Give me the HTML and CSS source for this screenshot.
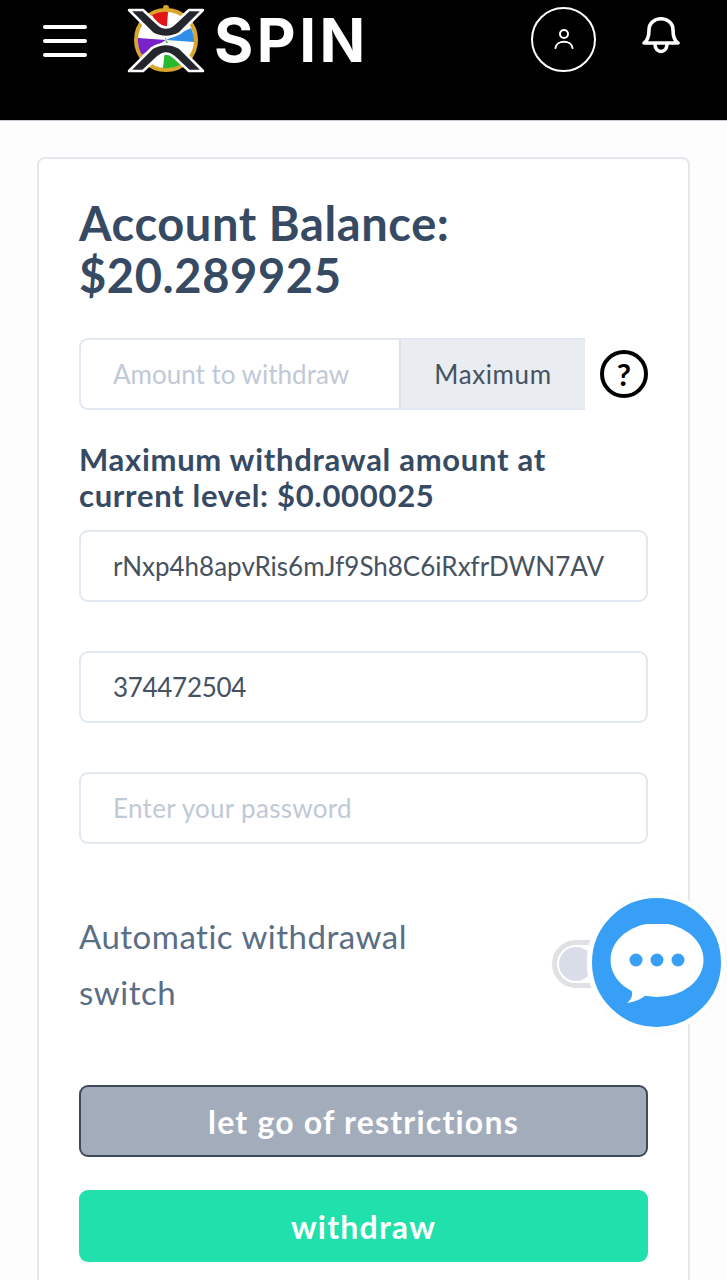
FILE: index.html
```html
<!DOCTYPE html>
<html>
<head>
  <title>Withdraw</title>
  <link rel="stylesheet" href="styles.css">
</head>
<body>
  <header class="topbar">
    <div class="menu-btn"><span></span><span></span><span></span></div>
    <div class="logo">
      <svg class="logo-mark" width="80" height="72" viewBox="0 0 80 72">
        <circle cx="40" cy="35" r="30" fill="#fff" stroke="#d9a52c" stroke-width="4"/>
        <path d="M40 35 L26 10 A28 28 0 0 1 42 7 Z" fill="#e01616"/>
        <path d="M40 35 L65 23 A28 28 0 0 1 68 37 Z" fill="#2f8fe8"/>
        <path d="M40 35 L12 33 A28 28 0 0 0 16 50 Z" fill="#7a22c9"/>
        <path d="M40 35 L37 63 A28 28 0 0 0 58 57 Z" fill="#29b92f"/>
        <circle cx="40" cy="3" r="3" fill="#d9a52c"/>
        <path class="x-arm" d="M3 5 L17 5 L32 19 Q40 26 48 19 L63 5 L77 5 L54 28 Q40 36 26 28 Z"/>
        <path class="x-arm" d="M3 66 L17 66 L32 52 Q40 45 48 52 L63 66 L77 66 L54 43 Q40 35 26 43 Z"/>
      </svg>
      <span class="logo-text">SPIN</span>
    </div>
    <div class="topbar-right">
      <div class="profile-btn">
        <svg width="20" height="24" viewBox="0 0 20 24" fill="none" stroke="#fff" stroke-width="2">
          <circle cx="10" cy="6" r="4"/>
          <path d="M1.5 20 C2.5 11.5 17.5 11.5 18.5 20" stroke-linecap="round"/>
        </svg>
      </div>
      <svg class="bell" width="38" height="38" viewBox="0 0 38 38" fill="none" stroke="#fff" stroke-width="3.6" stroke-linejoin="round">
        <path d="M2 26 C6.5 23 7 18 7 13 C7 -2 31 -2 31 13 C31 18 31.5 23 36 26 Z"/>
        <path d="M13 27 C13 37 25 37 25 27"/>
      </svg>
    </div>
  </header>

  <main class="page">
    <section class="card">
      <h1>Account Balance:<br>$20.289925</h1>

      <div class="amount-row">
        <div class="input-group">
          <div class="input-part placeholder">Amount to withdraw</div>
          <div class="addon">Maximum</div>
        </div>
        <div class="help">?</div>
      </div>

      <p class="limit">Maximum withdrawal amount at<br>current level: $0.000025</p>

      <div class="field field-first">rNxp4h8apvRis6mJf9Sh8C6iRxfrDWN7AV</div>
      <div class="field field-number">374472504</div>
      <div class="field field-password">Enter your password</div>

      <div class="switch-row">
        <div class="switch-label">Automatic withdrawal<br>switch</div>
        <div class="switch"><div class="knob"></div></div>
      </div>

      <div class="btn btn-gray">let go of restrictions</div>
      <div class="btn btn-green">withdraw</div>
    </section>
  </main>

  <div class="chat">
    <svg width="94" height="84" viewBox="0 0 94 84">
      <ellipse cx="47" cy="36" rx="46.5" ry="37" fill="#fff"/>
      <path d="M20 62 C24 70 22 75 17 79 C24 78 30 76 36 71 Z" fill="#fff"/>
      <circle cx="26" cy="36" r="6.5" fill="#379ff5"/>
      <circle cx="47" cy="36" r="6.5" fill="#379ff5"/>
      <circle cx="68" cy="36" r="6.5" fill="#379ff5"/>
    </svg>
  </div>
</body>
</html>
```

FILE: styles.css
```css
* {
  box-sizing: border-box;
}

html, body {
  margin: 0;
  height: 100%;
  overflow: hidden;
}

body {
  font-family: "Lato", "Noto Sans", sans-serif;
  font-variant-ligatures: none;
  background-color: #fdfdfe;
  color: #364a63;
  position: relative;
}

.topbar {
  height: 121px;
  background-color: #000;
  border-bottom: 1px solid #c9ccd6;
  display: flex;
  align-items: flex-start;
  padding: 5px 47px 0 43px;
}

.menu-btn {
  width: 44px;
  margin-top: 20px;
  display: flex;
  flex-direction: column;
  gap: 10px;
}

.menu-btn span {
  height: 4px;
  background-color: #fff;
  border-radius: 2px;
}

.logo {
  display: flex;
  align-items: flex-start;
  margin-left: 39px;
}

.x-arm {
  fill: #23262d;
  stroke: #fff;
  stroke-width: 2.5;
  stroke-linejoin: round;
}

.logo-text {
  font-family: "Inter", sans-serif;
  font-weight: 700;
  font-size: 60px;
  line-height: 70px;
  color: #fff;
  margin-left: 8px;
  letter-spacing: 3.5px;
}

.topbar-right {
  margin-left: auto;
  display: flex;
  align-items: flex-start;
  gap: 46px;
  padding-top: 2px;
}

.profile-btn {
  width: 65px;
  height: 65px;
  border: 2px solid #fff;
  border-radius: 50%;
  display: flex;
  align-items: center;
  justify-content: center;
}

.bell {
  margin-top: 10px;
}

.page {
  padding: 36px 37px 0;
}

.card {
  background-color: #fff;
  border: 2px solid #e4e7ec;
  border-radius: 8px;
  padding: 38px 40px 60px;
}

h1 {
  margin: 0;
  font-size: 47px;
  line-height: 52px;
  font-weight: 700;
  letter-spacing: 0.6px;
  color: #364a63;
}

.amount-row {
  display: flex;
  align-items: center;
  margin-top: 37px;
}

.input-group {
  width: 506px;
  height: 72px;
  display: flex;
  border: 2px solid #e2e8f0;
  border-right: 0;
  border-radius: 9px 0 0 9px;
  font-size: 26px;
}

.input-part {
  width: 318px;
  display: flex;
  align-items: center;
  padding-left: 32px;
}

.placeholder {
  color: #c0c9d6;
}

.addon {
  flex: 1;
  background-color: #e9ecf0;
  color: #46525f;
  border-left: 2px solid #dee2e8;
  display: flex;
  align-items: center;
  justify-content: center;
  letter-spacing: 0.6px;
}

.help {
  width: 48px;
  height: 48px;
  margin-left: 15px;
  border: 4px solid #000;
  border-radius: 50%;
  color: #000;
  font-size: 31px;
  font-weight: 700;
  display: flex;
  align-items: center;
  justify-content: center;
}

.limit {
  margin: 31px 0 0;
  font-size: 31px;
  line-height: 36px;
  font-weight: 700;
  letter-spacing: 0.7px;
}

.field {
  height: 72px;
  margin-top: 49px;
  border: 2px solid #e2e8f0;
  border-radius: 9px;
  display: flex;
  align-items: center;
  padding-left: 32px;
  font-size: 26px;
  color: #46525f;
  white-space: nowrap;
}

.field-first {
  margin-top: 17px;
}

.field-number {
  letter-spacing: -0.3px;
}

.field-password {
  color: #c0c9d6;
  letter-spacing: 0.3px;
}

.switch-row {
  display: flex;
  align-items: center;
  justify-content: space-between;
  margin-top: 64px;
}

.switch-label {
  font-size: 33px;
  line-height: 56px;
  letter-spacing: 0.5px;
  color: #5a6e85;
}

.switch {
  width: 96px;
  height: 48px;
  border: 5px solid #dfe1e5;
  border-radius: 24px;
  padding: 2px;
}

.knob {
  width: 34px;
  height: 34px;
  border-radius: 50%;
  background-color: #d9dde8;
}

.btn {
  height: 72px;
  border-radius: 9px;
  color: #fff;
  font-size: 32px;
  font-weight: 700;
  letter-spacing: 1.2px;
  display: flex;
  align-items: center;
  justify-content: center;
}

.btn-gray {
  margin-top: 65px;
  background-color: #a3acba;
  border: 2px solid #3f4b5b;
}

.btn-green {
  margin-top: 33px;
  background-color: #20e0ab;
}

.chat {
  position: absolute;
  left: 587px;
  top: 893px;
  width: 139px;
  height: 139px;
  border: 5px solid #fff;
  border-radius: 50%;
  background-color: #379ff5;
  box-shadow: 0 0 2px #eee;
  display: flex;
  align-items: center;
  justify-content: center;
  padding-top: 7px;
}
```
